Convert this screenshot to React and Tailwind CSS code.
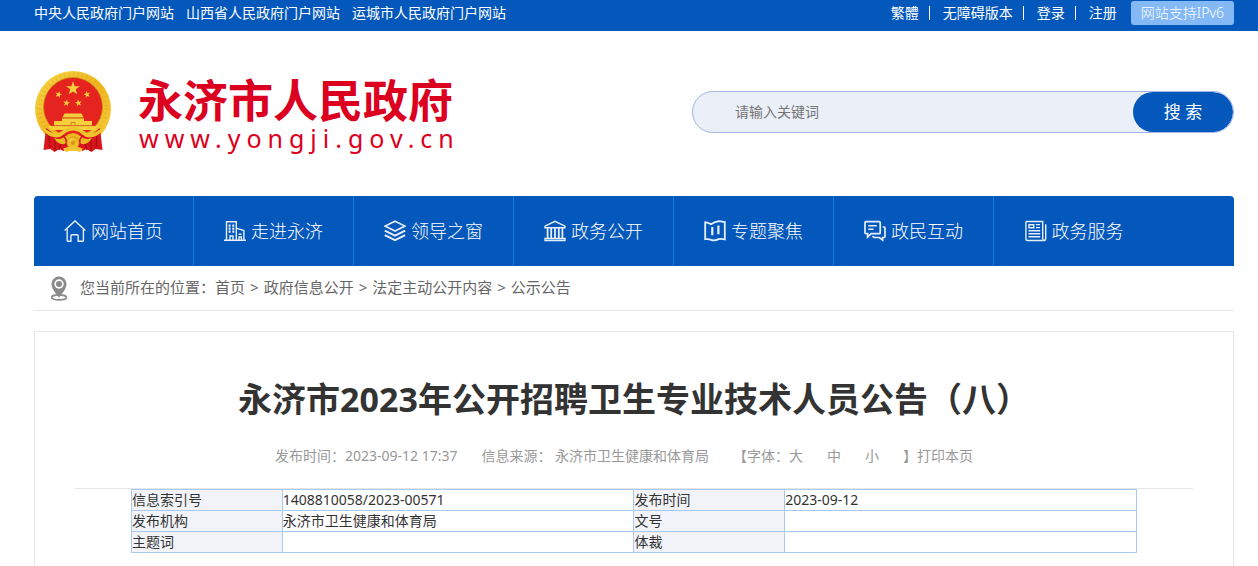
import { useState } from 'react'

const portals = ['中央人民政府门户网站', '山西省人民政府门户网站', '运城市人民政府门户网站']
const userLinks = ['繁體', '无障碍版本', '登录', '注册']

const navItems = [
  { label: '网站首页', Icon: HomeIcon },
  { label: '走进永济', Icon: BuildingIcon },
  { label: '领导之窗', Icon: LayersIcon },
  { label: '政务公开', Icon: HallIcon },
  { label: '专题聚焦', Icon: MapIcon },
  { label: '政民互动', Icon: ChatIcon },
  { label: '政务服务', Icon: NewsIcon },
]

const crumbs = ['首页', '政府信息公开', '法定主动公开内容', '公示公告']

const infoRows = [
  ['信息索引号', '1408810058/2023-00571', '发布时间', '2023-09-12'],
  ['发布机构', '永济市卫生健康和体育局', '文号', ''],
  ['主题词', '', '体裁', ''],
]

function NavSvg({ children }) {
  return (
    <svg viewBox="0 0 22 22" className="size-[22px] shrink-0" fill="none" stroke="#e6effa" strokeWidth="1.4" aria-hidden="true">
      {children}
    </svg>
  )
}

function HomeIcon() {
  return (
    <NavSvg>
      <path d="M.6 10.4 11 .9l10.4 9.5" />
      <path d="M3.2 9v11.4q0 .9.9.9h2.8v-5.4q0-1.2 1.2-1.2h4.9q1.2 0 1.2 1.2v5.4h4.3q.9 0 .9-.9V9" />
    </NavSvg>
  )
}

function BuildingIcon() {
  return (
    <NavSvg>
      <path d="M0 20.3h22M2.5 20V1.7h9.8V20M12.3 8.2l7.6 2.3V20" />
      <path d="M5.6 4.5v8.2M9.3 4.5v8.2" strokeWidth="2" strokeDasharray="2.2 .8" />
      <path d="M6 20v-4h3v4M14.6 14.2h3M15 20v-3h2.4v3" />
    </NavSvg>
  )
}

function LayersIcon() {
  return (
    <NavSvg>
      <path d="M11 1.3 21 6.1 11 11 1 6.1Z" strokeWidth="1.7" />
      <path d="m.8 10.6 10.2 5 10.2-5M.8 15.2l10.2 5 10.2-5" strokeWidth="2" />
    </NavSvg>
  )
}

function HallIcon() {
  return (
    <NavSvg>
      <path d="M1 7.8V6.2l10-4.8 10 4.8v1.6ZM1 20.5v-2h20v2Z" />
      <path d="M3.6 8v10M7.2 8v10M11 8v10M14.8 8v10M18.4 8v10" strokeWidth="1.8" />
    </NavSvg>
  )
}

function MapIcon() {
  return (
    <NavSvg>
      <path d="M1.2 2.2Q4 2.6 7 4.2q4-2.6 8-3l5.8.9v17.2q-3.2-.8-6.3-.2-3.6 2-7.3.7-2.6-1-6-.6Z" strokeWidth="1.8" />
      <path d="M8.3 7v8.2M14.4 5.4v8.8" strokeWidth="2.2" />
    </NavSvg>
  )
}

function ChatIcon() {
  return (
    <NavSvg>
      <path d="M2 1.7h13.2q1 0 1 1v10q0 1-1 1H7.2L3.6 17v-3.3H2q-1 0-1-1v-10q0-1 1-1Z" strokeWidth="1.7" />
      <path d="M4.2 5.8h8.6M4.2 9.3h5.3" strokeWidth="1.6" />
      <path d="M18.600 7h1.600q.8 0 .8.900v8.700q0 .9-.8.900h-1.600V20l-3.400-2.500H10l-1.500-1.300" strokeWidth="1.7" />
    </NavSvg>
  )
}

function NewsIcon() {
  return (
    <NavSvg>
      <path d="M.9 1.5h16.800v16.700q0 2.300 1.500 2.300t1.500-2.300V4.300M.9 1.500v17.200q0 1.800 1.800 1.800h16.300" />
      <path d="M4 4.800h4.800v2.900H4ZM10.900 4.600H15M10.900 7.600H15M3.500 10.700h11.700M3.500 13.700h11.700M3.500 16.800h11.700" />
    </NavSvg>
  )
}

function PinIcon() {
  return (
    <svg viewBox="0 0 18 25" className="h-[25px] w-[18px] shrink-0" aria-hidden="true">
      <ellipse cx="9" cy="21.4" rx="7.4" ry="2.5" fill="none" stroke="#8a8a8a" strokeWidth="1.6" />
      <path d="M9 .5a7.500 7.500 0 0 0-7.500 7.500c0 4.500 3.600 8.300 7.500 13.800 3.900-5.500 7.500-9.300 7.500-13.800A7.500 7.500 0 0 0 9 .5Z" fill="#8a8a8a" />
      <circle cx="9" cy="8" r="4.700" fill="#fff" />
      <circle cx="9" cy="8" r="3" fill="#8a8a8a" />
    </svg>
  )
}

const star = 'M0-10 2.4-3.2 9.5-3.1 3.8 1.2 5.9 8.1 0 4 -5.9 8.1 -3.8 1.2 -9.5-3.1 -2.4-3.2Z'

function Emblem() {
  return (
    <svg viewBox="0 0 78 84" className="h-[84px] w-[78px] shrink-0" role="img" aria-label="国徽">
      <defs>
        <linearGradient id="gold" x1="0" y1="0" x2="1" y2="1">
          <stop offset="0" stopColor="#f9d94a" />
          <stop offset=".5" stopColor="#eeb620" />
          <stop offset="1" stopColor="#f6cf3c" />
        </linearGradient>
      </defs>
      <circle cx="39" cy="39" r="38" fill="url(#gold)" />
      <circle cx="39" cy="38" r="33.500" fill="none" stroke="#d79a18" strokeWidth="4" strokeDasharray="1.500 3" opacity=".3" />
      <circle cx="39" cy="37" r="29.500" fill="#e52420" stroke="#c98b14" strokeWidth=".8" />
      <g fill="#f6cf3c">
        <path d={star} transform="translate(39 18.500) scale(.72)" />
        <path d={star} transform="translate(24.500 24.500) rotate(15) scale(.36)" />
        <path d={star} transform="translate(53 24.500) rotate(-15) scale(.36)" />
        <path d={star} transform="translate(32.500 33) rotate(10) scale(.36)" />
        <path d={star} transform="translate(44.500 33) rotate(-10) scale(.36)" />
        <path d="M30.500 43.500h17l2 4h-21ZM28 48.300h22v2.700h8v4.500H20V51h8Z" />
        <path d="M14 56h50l-2.500 4h-45Z" />
      </g>
      <path d="M28 48h22M20 55.700h38M37 55.500v-3h4v3" stroke="#c9701b" strokeWidth=".8" fill="none" />
      {/* red drapery and the gold ribbon tied over it */}
      <path d="M12 58 9.500 80l7-1 4 3 5-3 4 2 6-5h7l6 5 4-2 5 3 4-3 7 1L66 58l-9 7H21Z" fill="#d8161b" />
      <path d="m15 66 1 12M21 69v12M27 72l-2 8M63 66l-1 12M57 69v12M51 72l2 8" stroke="#a50d12" strokeWidth="1.300" fill="none" />
      <path d="M9 56.500q11 11 19 4.500 5-4 11-4t11 4q8 6.500 19-4.500l-2 6q-8 7-16 4-6-6-12-6t-12 6q-8 3-16-4Z" fill="#f1c32e" />
      <path d="M20 68q7 2.500 11-1.500 4-3.500 8-3.500t8 3.500q4 4 11 1.500-4 7-10.500 6-4-5-8.500-5t-8.500 5Q24 75 20 68Z" fill="#edb922" />
      <path d="M30 66.500q3 3 2 6M48 66.500q-3 3-2 6" stroke="#d8161b" strokeWidth="1.500" fill="none" />
      <circle cx="39" cy="73" r="6" fill="url(#gold)" stroke="#c98b14" strokeWidth=".8" />
      <circle cx="39" cy="73" r="2" fill="#d9931a" />
      <path d="M29 78.500q10-4 20 0L46 82q-7-2.500-14 0Z" fill="#f1c32e" />
    </svg>
  )
}

export default function App() {
  const [keyword, setKeyword] = useState('')

  return (
    <div lang="zh-CN" className={'flex min-h-screen flex-col bg-white text-sm text-[#333] font-["Noto_Sans","Noto_Sans_CJK_SC",sans-serif]'}>
      <div className="h-[31px] bg-[#0458bb] text-white">
        <div className="flex h-[26px] items-center justify-between pr-6 pl-[34px]">
          <div className="flex gap-3">
            {portals.map(p => (
              <a key={p} href="#">{p}</a>
            ))}
          </div>
          <div className="flex items-center">
            {userLinks.map((l, i) => (
              <div key={l} className="flex items-center">
                {i > 0 && <span className="mr-[13px] ml-[10px] h-3.5 w-px bg-white" />}
                <a href="#">{l}</a>
              </div>
            ))}
            <a href="#" className="ml-3.5 flex h-6 items-center rounded-[3px] bg-[#84b9f6] px-2.5 font-light">网站支持IPv6</a>
          </div>
        </div>
      </div>

      <div className="flex flex-1 flex-col pr-6 pl-[34px]">
        <header className="flex h-[165px] items-center justify-between pb-[3px]">
          <a href="#" className="flex items-center text-[#db0020]">
            <Emblem />
            <span className="ml-[26px] block">
              <span className="block text-[45px] leading-[52px] font-bold">永济市人民政府</span>
              <span className="block pl-px text-[25px] leading-[22px] tracking-[6px]">www.yongji.gov.cn</span>
            </span>
          </a>
          <form
            onSubmit={e => e.preventDefault()}
            className="flex h-[42px] w-[542px] overflow-hidden rounded-full border border-[#9fb5e3] bg-[#ebeff7]"
          >
            <input
              type="text" aria-label="请输入关键词" placeholder="请输入关键词"
              value={keyword} onChange={e => setKeyword(e.target.value)}
              className="min-w-0 flex-1 pl-[42px] outline-none placeholder:text-[#757575]"
            />
            <button type="submit" className="w-[100px] cursor-pointer rounded-full bg-[#0458bb] text-[17px] text-white">搜 索</button>
          </form>
        </header>

        <nav className="flex h-[70px] rounded-t-[4px] bg-[#0458bb] text-lg font-light text-white">
          {navItems.map(({ label, Icon }) => (
            <a key={label} href="#" className="flex w-40 items-center justify-center gap-[5px] border-r border-[#0a7fdb] last:border-r-0">
              <Icon />
              {label}
            </a>
          ))}
        </nav>

        <div className="flex h-[45px] items-center border-b border-[#e6e6e6] pl-4 text-[15px] text-[#666]">
          <PinIcon />
          <span className="ml-3">您当前所在的位置：</span>
          {crumbs.map((c, i) => (
            <span key={c}>
              {i > 0 && <span className="mx-[5px]">&gt;</span>}
              <a href="#">{c}</a>
            </span>
          ))}
        </div>

        <article className="mt-5 flex-1 border border-b-0 border-[#e6e6e6] px-10 pt-10">
          <h1 className="text-center text-[34px] leading-[54px] font-bold">永济市2023年公开招聘卫生专业技术人员公告（八）</h1>
          <div className="flex h-[63px] justify-center border-b border-[#e6e6e6] pt-5 pr-5 leading-5 text-[#999]">
            <span className="mr-6">发布时间：2023-09-12 17:37</span>
            <span className="mr-6">信息来源： 永济市卫生健康和体育局</span>
            <span>【字体：</span>
            <button type="button" className="mr-6 h-5 cursor-pointer">大</button>
            <button type="button" className="mr-6 h-5 cursor-pointer">中</button>
            <button type="button" className="mr-6 h-5 cursor-pointer">小</button>
            <span>】</span>
            <button type="button" className="h-5 cursor-pointer">打印本页</button>
          </div>

          <table className="mx-auto w-9/10 table-fixed border-collapse text-left leading-5">
            <tbody>
              {infoRows.map(([k1, v1, k2, v2]) => (
                <tr key={k1} className="h-[21px]">
                  <th scope="row" className="w-[15%] border border-[#a9caef] bg-[#f2f3f8] font-normal">{k1}</th>
                  <td className="w-[35%] border border-[#a9caef]">{v1}</td>
                  <th scope="row" className="w-[15%] border border-[#a9caef] bg-[#f2f3f8] font-normal">{k2}</th>
                  <td className="w-[35%] border border-[#a9caef]">{v2}</td>
                </tr>
              ))}
            </tbody>
          </table>
        </article>
      </div>
    </div>
  )
}
